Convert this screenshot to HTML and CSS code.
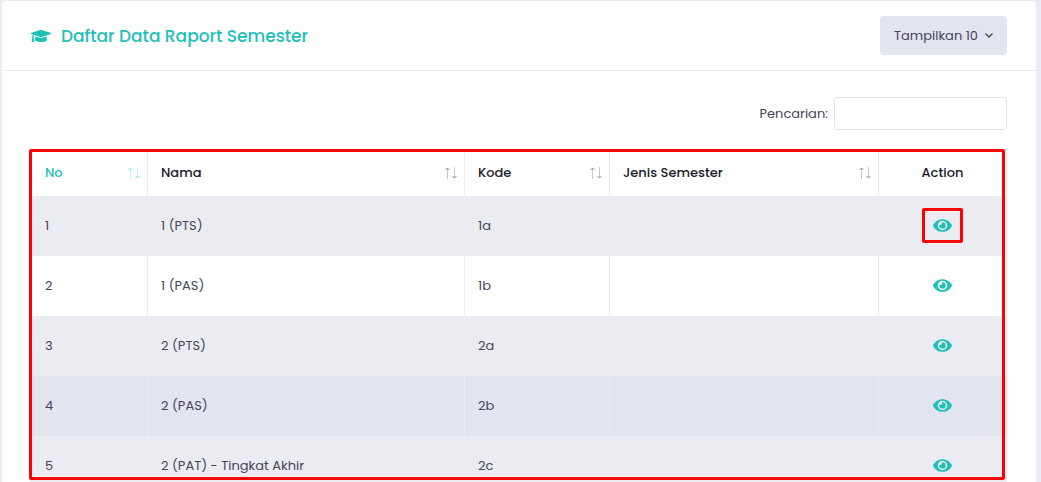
FILE: index.html
```html
<!DOCTYPE html>
<html lang="id">
<head>
	<meta charset="utf-8">
	<title>Daftar Data Raport Semester</title>
	<link rel="stylesheet" href="styles.css">
</head>
<body>
	<svg class="symbols" aria-hidden="true">
		<symbol id="cap" viewBox="0 0 640 512">
			<path d="M622.34 153.2L343.4 67.5c-15.2-4.67-31.6-4.67-46.79 0L17.66 153.2c-23.54 7.23-23.54 38.36 0 45.59l48.63 14.94c-10.67 13.19-17.23 29.28-17.88 46.9C38.78 266.15 32 276.11 32 288c0 10.78 5.68 19.85 13.86 25.65L20.33 428.53C18.11 438.52 25.71 448 35.94 448h56.11c10.24 0 17.84-9.48 15.62-19.47L82.14 313.65C90.32 307.85 96 298.78 96 288c0-11.57-6.47-21.25-15.66-26.87.76-15.02 8.44-28.3 20.69-36.72L296.6 284.5c9.06 2.78 26.44 6.25 46.79 0l278.95-85.7c23.55-7.24 23.55-38.36 0-45.6zM352.79 315.09c-28.53 8.76-52.84 3.92-65.59 0l-145.02-44.55L128 384c0 35.35 85.96 64 192 64s192-28.65 192-64l-14.18-113.47-145.03 44.56z"/>
		</symbol>
		<symbol id="eye" viewBox="0 0 576 512">
			<path d="M572.52 241.4C518.29 135.59 410.93 64 288 64S57.68 135.64 3.48 241.41a32.35 32.35 0 0 0 0 29.19C57.71 376.41 165.07 448 288 448s230.32-71.64 284.52-177.41a32.35 32.35 0 0 0 0-29.19zM288 400a144 144 0 1 1 144-144 143.93 143.93 0 0 1-144 144zm0-240a95.31 95.31 0 0 0-25.31 3.79 47.85 47.85 0 0 1-66.9 66.9A95.78 95.78 0 1 0 288 160z"/>
		</symbol>
		<symbol id="sort" viewBox="0 0 12 12">
			<path class="stem" d="M2.5 2v10M9.5 0v10"/>
			<path class="up" d="M0.5 3L2.5 1L4.5 3"/>
			<path class="down" d="M7.5 9L9.5 11L11.5 9"/>
		</symbol>
	</svg>

	<main class="card">
		<header class="card-head">
			<h1 class="title"><svg class="icon-cap"><use href="#cap"/></svg>Daftar Data Raport Semester</h1>
			<button type="button" class="show-btn">Tampilkan 10
				<svg class="caret" viewBox="0 0 8 5"><path d="M0.5 0.5L4 4L7.5 0.5"/></svg>
			</button>
		</header>

		<div class="card-body">
			<div class="search">
				<label for="search">Pencarian:</label>
				<input type="search" id="search">
			</div>

			<div class="table-wrap">
				<table class="table">
					<colgroup>
						<col class="col-no">
						<col>
						<col class="col-kode">
						<col class="col-jenis">
						<col class="col-action">
					</colgroup>
					<thead>
						<tr>
							<th><button type="button" class="sort active">No<svg class="icon-sort"><use href="#sort"/></svg></button></th>
							<th><button type="button" class="sort">Nama<svg class="icon-sort"><use href="#sort"/></svg></button></th>
							<th><button type="button" class="sort">Kode<svg class="icon-sort"><use href="#sort"/></svg></button></th>
							<th><button type="button" class="sort">Jenis Semester<svg class="icon-sort"><use href="#sort"/></svg></button></th>
							<th class="action">Action</th>
						</tr>
					</thead>
					<tbody>
						<tr>
							<td>1</td>
							<td>1 (PTS)</td>
							<td>1a</td>
							<td></td>
							<td class="action"><a href="#" class="view marked" aria-label="Lihat"><svg class="icon-eye"><use href="#eye"/></svg></a></td>
						</tr>
						<tr>
							<td>2</td>
							<td>1 (PAS)</td>
							<td>1b</td>
							<td></td>
							<td class="action"><a href="#" class="view" aria-label="Lihat"><svg class="icon-eye"><use href="#eye"/></svg></a></td>
						</tr>
						<tr>
							<td>3</td>
							<td>2 (PTS)</td>
							<td>2a</td>
							<td></td>
							<td class="action"><a href="#" class="view" aria-label="Lihat"><svg class="icon-eye"><use href="#eye"/></svg></a></td>
						</tr>
						<tr class="hover">
							<td>4</td>
							<td>2 (PAS)</td>
							<td>2b</td>
							<td></td>
							<td class="action"><a href="#" class="view" aria-label="Lihat"><svg class="icon-eye"><use href="#eye"/></svg></a></td>
						</tr>
						<tr>
							<td>5</td>
							<td>2 (PAT) - Tingkat Akhir</td>
							<td>2c</td>
							<td></td>
							<td class="action"><a href="#" class="view" aria-label="Lihat"><svg class="icon-eye"><use href="#eye"/></svg></a></td>
						</tr>
					</tbody>
				</table>
				<div class="outline"></div>
			</div>
		</div>
	</main>
</body>
</html>
```
FILE: styles.css
```css
* {
	box-sizing: border-box;
}

body {
	background: #e9ebf5;
	color: #464457;
	font-family: Poppins, Inter, sans-serif;
	font-size: 13px;
	height: 100vh;
	line-height: 20px;
	margin: 0;
	overflow: hidden;
	padding: 1px 5px 0 2px;
}

button, input {
	color: inherit;
	font: inherit;
}

.symbols {
	display: none;
}

.card {
	background: #fff;
	border-radius: 4px 4px 0 0;
}

.card-head {
	align-items: center;
	border-bottom: 1px solid #ebecf3;
	display: flex;
	height: 70px;
	justify-content: space-between;
	padding: 0 29px;
}

.title {
	align-items: center;
	color: #1fc0b9;
	display: flex;
	font-size: 17px;
	font-weight: 500;
	gap: 10px;
	margin: 0;
}

.icon-cap {
	fill: currentColor;
	height: 16px;
	width: 20px;
}

.show-btn {
	align-items: center;
	background: #e2e5ee;
	border: 0;
	border-radius: 4px;
	display: flex;
	gap: 7px;
	height: 39px;
	padding: 0 14px;
}

.caret {
	fill: none;
	height: 5px;
	stroke: currentColor;
	stroke-width: 1.4;
	width: 8px;
}

.card-body {
	padding: 26px 29px 0 28px;
}

.search {
	align-items: center;
	display: flex;
	gap: 6px;
	justify-content: flex-end;
	margin-bottom: 20px;
}

.search input {
	appearance: none;
	background: #fff;
	border: 1px solid #e2e5ee;
	border-radius: 3px;
	height: 33px;
	padding: 0 10px;
	width: 173px;
}

.table-wrap {
	position: relative;
}

.table {
	border: 1px solid #ebecf1;
	border-right: 0;
	border-spacing: 0;
	table-layout: fixed;
	width: 100%;
}

.col-no     {width: 117px}
.col-kode   {width: 145px}
.col-jenis  {width: 269px}
.col-action {width: 128px}

th, td {
	border-right: 1px solid #ebecf1;
	padding: 0 13px;
	text-align: left;
}

th {
	color: #1b1a2b;
	font-weight: 500;
	height: 45px;
	padding: 0 7px 2px 13px;
}

td {
	height: 60px;
}

th:first-child, td:first-child {
	padding-left: 14px;
}

.action {
	padding: 0 0 2px;
	text-align: center;
}

tbody tr:nth-child(odd) td {
	background: #ebecf1;
}

tbody .hover td {
	background: #e2e5ee;
}

.sort {
	align-items: center;
	background: none;
	border: 0;
	display: flex;
	justify-content: space-between;
	padding: 0;
	width: 100%;
}

.sort.active {
	color: #1fc0b9;
}

.icon-sort {
	fill: none;
	height: 12px;
	stroke: currentColor;
	width: 12px;
}

.stem {
	opacity: 0.25;
}

.up, .down {
	opacity: 0.5;
}

.view {
	align-items: center;
	border: 3px solid transparent;
	color: #1fc0b9;
	display: flex;
	height: 35px;
	justify-content: center;
	margin: 0 auto;
	width: 41px;
}

.icon-eye {
	fill: currentColor;
	height: 17px;
	width: 19px;
}

.marked {
	border-color: #f00;
	border-radius: 2px;
}

/* frame drawn over the table */
.outline {
	border: 3px solid #f00;
	border-radius: 2px;
	height: 331px;
	left: -1px;
	pointer-events: none;
	position: absolute;
	right: 2px;
	top: -1px;
}
```
